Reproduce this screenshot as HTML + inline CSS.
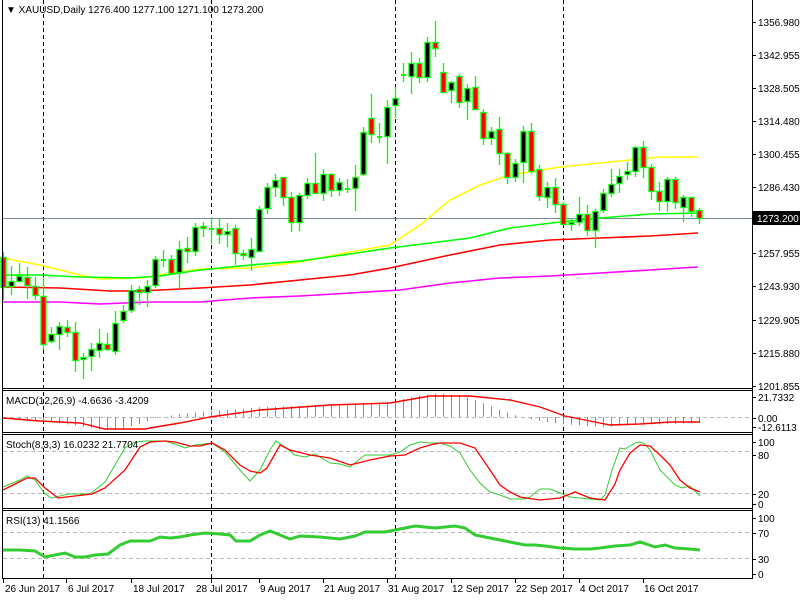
<!DOCTYPE html>
<html><head><meta charset="utf-8"><style>
html,body{margin:0;padding:0;background:#fff;width:800px;height:600px;overflow:hidden}
svg{display:block;font-family:"Liberation Sans",sans-serif;font-size:10px}
</style></head><body>
<svg id="s" width="800" height="600" xmlns="http://www.w3.org/2000/svg">
<rect width="800" height="600" fill="#fff"/>
<g id="grid" stroke="#bbb" stroke-dasharray="4,3" stroke-width="1">
<line x1="3" y1="417.5" x2="752" y2="417.5"/>
<line x1="3" y1="451.5" x2="752" y2="451.5"/>
<line x1="3" y1="493.5" x2="752" y2="493.5"/>
<line x1="3" y1="532.5" x2="752" y2="532.5"/>
<line x1="3" y1="558.5" x2="752" y2="558.5"/>
</g>
<g stroke="#000" stroke-dasharray="4,3" stroke-width="1">
<line x1="43.5" y1="0" x2="43.5" y2="578"/>
<line x1="211.5" y1="0" x2="211.5" y2="578"/>
<line x1="395.5" y1="0" x2="395.5" y2="578"/>
<line x1="563.5" y1="0" x2="563.5" y2="578"/>
</g>
<line x1="3" y1="218.5" x2="752" y2="218.5" stroke="#778899"/>
<g fill="none" stroke-width="1.6">
<polyline stroke="#ffff00" points="3,258 40,265 80,275 100,279 140,278 160,275 200,269 250,268 300,262 350,252 390,245 420,225 450,200 480,185 510,175 560,167 600,163 630,160 660,157 698,157"/>
<polyline stroke="#00ff00" points="3,275 40,275 80,277 130,278 160,276 200,270 250,265 300,261 350,254 390,248 430,243 470,238 510,228 560,222 600,218 650,214 698,213"/>
<polyline stroke="#ff0000" points="3,287 60,288 110,291 140,291 200,288 250,285 300,280 350,275 390,268 450,255 500,245 550,240 600,238 650,236 698,233"/>
<polyline stroke="#ff00ff" points="3,302 60,302 100,304 150,302 200,302 250,298 300,296 350,293 400,290 450,283 500,278 550,276 600,273 650,270 698,267"/>
</g>
<g id="candles"></g>
<g id="macd"></g>
<polyline fill="none" stroke="#ff0000" stroke-width="1.4" points="3,418 40,421 80,423 105,429 145,429 150,428 180,423 210,417 260,410 330,405 390,403 430,396 470,396 510,400 540,407 565,416 590,421 610,425 640,424 670,422 700,422"/>
<polyline fill="none" stroke="#33cc33" stroke-width="1" points="3,487 20,480 27,476 35,480 45,494 52,498 68,494 90,494 105,482 115,465 125,448 135,442 145,441 165,441 175,444 185,448 195,445 212,443 225,452 240,470 250,481 260,470 270,450 276,441 285,447 295,455 305,457 315,454 330,463 340,464 350,467 365,455 390,455 400,452 410,445 420,442 430,443 440,443 450,446 460,453 470,470 480,483 490,492 500,495 510,499 525,499 530,497 540,489 550,489 560,493 570,497 580,498 590,499 600,500 605,495 612,470 620,448 625,449 635,443 640,442 645,444 650,450 660,470 675,485 682,488 690,486 700,496"/>
<polyline fill="none" stroke="#ff0000" stroke-width="1.3" points="3,490 27,478 35,478 45,488 58,498 92,494 105,488 125,470 140,447 150,442 165,441 175,442 190,446 200,446 212,443 225,450 240,465 250,471 260,473 267,468 280,445 290,450 310,455 330,458 350,465 370,460 390,456 405,455 420,448 430,445 440,443 460,443 475,448 490,470 500,485 510,492 520,497 540,500 560,498 575,492 590,498 605,500 615,484 620,470 630,453 640,445 650,446 660,455 670,465 680,480 690,488 700,492"/>
<polyline fill="none" stroke="#33cc33" stroke-width="3" points="3,550 20,550 35,551 45,557 55,555 65,553 75,557 85,557 95,555 108,554 120,545 130,541 150,541 160,537 170,538 180,537 190,535 205,533 220,534 230,535 236,541 250,541 260,535 270,531 280,535 290,539 300,536 320,537 340,539 355,536 365,532 385,532 400,529 415,526 425,527 435,528 445,527 455,526 465,528 475,535 485,537 500,540 515,543 525,545 535,545 545,546 560,548 575,549 590,549 600,548 615,546 630,545 640,542 655,547 665,545 675,548 690,549 700,550"/>
<g stroke="#000" fill="none" stroke-width="1">
<line x1="2.5" y1="0" x2="2.5" y2="579"/>
<line x1="752.5" y1="0" x2="752.5" y2="579"/>
<line x1="2" y1="388.5" x2="753" y2="388.5"/>
<line x1="2" y1="390.5" x2="753" y2="390.5"/>
<line x1="2" y1="432.5" x2="753" y2="432.5"/>
<line x1="2" y1="434.5" x2="753" y2="434.5"/>
<line x1="2" y1="508.5" x2="753" y2="508.5"/>
<line x1="2" y1="510.5" x2="753" y2="510.5"/>
<line x1="2" y1="578.5" x2="753" y2="578.5"/>
</g>
<g id="ticks" stroke="#000"></g>
<rect x="753" y="211" width="47" height="14" fill="#000"/>
<text x="757" y="222" fill="#fff">1273.200</text>
<g fill="#000">
<text x="6" y="13">▼ XAUUSD,Daily  1276.400 1277.100 1271.100 1273.200</text>
<text x="6" y="404">MACD(12,26,9) -4.6636 -3.4209</text>
<text x="6" y="448">Stoch(8,3,3) 16.0232 21.7704</text>
<text x="6" y="524">RSI(13) 41.1566</text>
</g>
<g id="labels" fill="#000"></g>
</svg>
<script>
var NS="http://www.w3.org/2000/svg";
function el(p,t,a,txt){var e=document.createElementNS(NS,t);for(var k in a)e.setAttribute(k,a[k]);if(txt)e.textContent=txt;p.appendChild(e);return e;}
var C=[[3,257,287,252,300],[11,286,281,266,295],[19,281,276,263,283],[27,277,285,267,299],[35,286,295,277,300],[43,296,344,277,350],[51,341,334,327,343],[59,334,326,322,350],[67,327,332,320,337],[75,332,360,322,372],[83,359,357,353,379],[91,356,349,343,371],[99,350,343,329,358],[107,344,349,333,351],[115,351,323,311,355],[123,320,311,305,323],[131,310,290,285,313],[139,289,292,286,305],[147,292,286,280,307],[155,285,259,256,288],[163,259,260,250,267],[171,259,273,255,275],[179,272,249,241,288],[187,248,251,237,263],[195,251,227,223,256],[203,226,228,222,237],[211,228,229,217,244],[219,228,234,219,244],[227,234,231,223,247],[235,228,253,225,265],[243,253,255,250,260],[251,257,249,238,271],[259,251,209,206,252],[267,208,187,183,214],[275,187,180,174,197],[283,177,197,177,206],[291,197,222,192,232],[299,222,195,193,231],[307,195,183,178,199],[315,183,193,153,194],[323,193,174,169,201],[331,174,190,173,197],[339,190,182,178,196],[347,188,189,179,193],[355,188,177,165,211],[363,174,132,127,176],[371,118,134,94,143],[379,136,137,123,143],[387,136,107,100,164],[395,105,98,87,118],[403,74,75,63,82],[411,76,63,52,94],[419,63,77,58,83],[427,77,42,37,82],[435,42,48,21,57],[443,72,92,63,93],[451,90,82,81,103],[459,76,102,74,108],[467,101,88,84,120],[475,87,109,76,110],[483,112,138,109,145],[491,138,131,127,145],[499,129,153,117,165],[507,153,177,152,184],[515,177,163,159,182],[523,162,131,126,183],[531,131,171,123,174],[539,169,196,165,201],[547,197,187,182,208],[555,187,204,178,213],[563,204,224,202,225],[571,224,222,218,231],[579,222,214,197,226],[587,214,230,205,236],[595,230,211,209,248],[603,210,193,189,213],[611,193,184,169,197],[619,183,176,169,193],[627,174,171,162,180],[635,171,147,146,177],[643,147,167,141,178],[651,167,191,164,200],[659,191,201,182,211],[667,201,179,177,212],[675,179,202,177,209],[683,207,197,195,222],[691,197,211,197,217],[699,210,218,208,224]];
var g=document.getElementById("candles");
C.forEach(function(c){var x=c[0],t=Math.min(c[1],c[2]),b=Math.max(c[1],c[2]),bear=c[2]>c[1];
el(g,"line",{x1:x+.5,y1:c[3],x2:x+.5,y2:c[4],stroke:"#00ff00","stroke-width":1.3});
if(b-t<2){el(g,"rect",{x:x-2,y:t,width:5,height:2,fill:"#00ff00"});}
else el(g,"rect",{x:x-2,y:t+.5,width:5,height:b-t,fill:bear?"#ff0000":"#000",stroke:"#00ff00","stroke-width":1.3});});
var M=[[3,418],[40,421],[80,426],[100,430],[120,429],[140,424],[155,418],[180,414],[210,411],[230,410],[260,407],[330,405],[390,402],[420,395],[440,393],[470,398],[500,410],[520,417],[540,421],[560,424],[600,427],[640,425],[700,423]];
function interp(x){for(var i=0;i<M.length-1;i++){if(x>=M[i][0]&&x<=M[i+1][0]){var f=(x-M[i][0])/(M[i+1][0]-M[i][0]);return M[i][1]+f*(M[i+1][1]-M[i][1]);}}return 418;}
var mg=document.getElementById("macd");
for(var x=3;x<=699;x+=8){var y=interp(x);el(mg,"line",{x1:x+.5,y1:417,x2:x+.5,y2:y,stroke:"#33cc33","stroke-width":1});}
var L=document.getElementById("labels"),T=document.getElementById("ticks");
[["1356.980",22],["1342.955",55],["1328.505",88],["1314.480",121],["1300.455",154],["1286.430",187],["1257.955",253],["1243.930",286],["1229.905",320],["1215.880",353],["1201.855",386],["21.7332",397],["0.00",418],["-12.6113",427],["100",442],["80",455],["20",494],["0",504],["100",518],["70",533],["30",559],["0",574]].forEach(function(a){el(L,"text",{x:758,y:a[1]+4},a[0]);el(T,"line",{x1:752,y1:a[1]+.5,x2:756,y2:a[1]+.5});});
[["26 Jun 2017",3,3],["6 Jul 2017",66,66],["18 Jul 2017",131,131],["28 Jul 2017",194,211],["9 Aug 2017",258,259],["21 Aug 2017",322,323],["31 Aug 2017",386,387],["12 Sep 2017",450,451],["22 Sep 2017",514,515],["4 Oct 2017",578,579],["16 Oct 2017",642,643]].forEach(function(a){el(L,"text",{x:a[1]+2,y:592},a[0]);el(T,"line",{x1:a[2]+.5,y1:579,x2:a[2]+.5,y2:583});});
</script>
</body></html>
